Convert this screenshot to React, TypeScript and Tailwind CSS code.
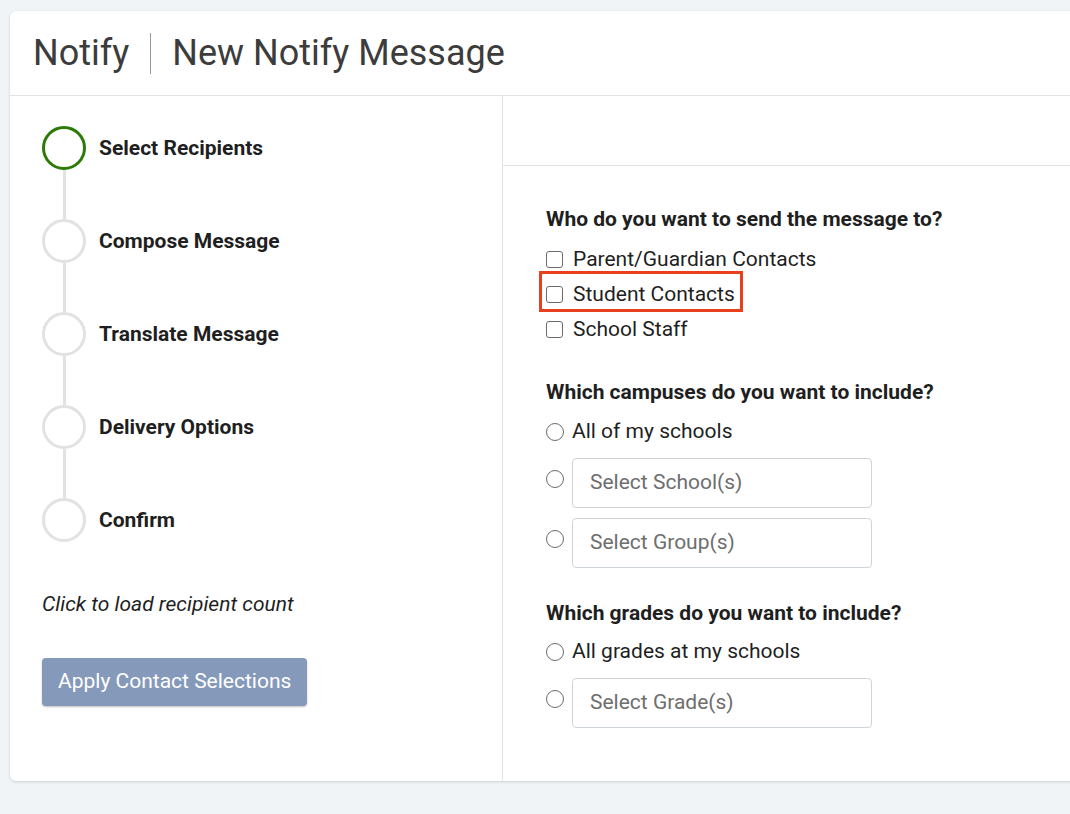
import { useState } from "react";

const steps = [
  "Select Recipients",
  "Compose Message",
  "Translate Message",
  "Delivery Options",
  "Confirm",
];

function Checkbox({ label }: { label: string }) {
  return (
    <label className="flex items-center gap-[10px] h-[35px]">
      <span className="w-[17px] h-[17px] border border-[#6b6b6b] rounded-[3px] bg-white shrink-0" />
      <span>{label}</span>
    </label>
  );
}

function Radio({ label }: { label: string }) {
  return (
    <label className="flex items-center gap-[8px] h-[38px]">
      <span className="w-[18px] h-[18px] border border-[#6b6b6b] rounded-full bg-white shrink-0" />
      <span>{label}</span>
    </label>
  );
}

function RadioSelect({ placeholder }: { placeholder: string }) {
  return (
    <div className="flex items-start gap-[8px]">
      <span className="w-[18px] h-[18px] border border-[#6b6b6b] rounded-full bg-white shrink-0 mt-[12px]" />
      <div className="w-[300px] h-[50px] border border-[#cfd4da] rounded-[4px] px-[17px] flex items-center text-[#6e6e6e]">
        {placeholder}
      </div>
    </div>
  );
}

export default function App() {
  const [active] = useState(0);

  return (
    <div
      className="min-h-[814px] bg-[#f1f4f7] pt-[11px] pl-[10px] overflow-hidden"
      style={{ fontFamily: "Roboto, 'Liberation Sans', sans-serif" }}
    >
      <div className="bg-white w-[1080px] h-[770px] rounded-tl-[6px] rounded-bl-[6px] shadow-[0_1px_3px_rgba(0,0,0,0.15)] flex flex-col">
        {/* Header */}
        <div className="h-[85px] border-b border-[#e3e3e3] flex items-center pl-[23px] text-[36px] text-[#3c3c3c]">
          <span>Notify</span>
          <span className="w-px h-[41px] bg-[#9a9a9a] mx-[21px]" />
          <span>New Notify Message</span>
        </div>

        <div className="flex flex-1">
          {/* Stepper */}
          <div className="w-[493px] border-r border-[#e3e3e3] pl-[32px] pt-[30px]">
            <div className="flex flex-col">
              {steps.map((s, i) => (
                <div key={s} className="flex">
                  <div className="flex flex-col items-center w-[44px]">
                    <span
                      className={`w-[44px] h-[44px] rounded-full border-[3px] ${
                        i === active ? "border-[#2e7a08]" : "border-[#e2e2e2]"
                      }`}
                    />
                    {i < steps.length - 1 && (
                      <span className="w-[3px] h-[49px] bg-[#e2e2e2]" />
                    )}
                  </div>
                  <div className="ml-[13px] h-[44px] pt-[2px] flex items-center text-[21px] font-bold text-[#1f1f1f]">
                    {s}
                  </div>
                </div>
              ))}
            </div>
            <p className="italic text-[21px] leading-[28px] text-[#1f1f1f] mt-[48px]">
              Click to load recipient count
            </p>
            <button className="mt-[40px] h-[48px] px-[16px] bg-[#8599bb] text-white text-[21px] rounded-[4px] shadow-[0_1px_2px_rgba(0,0,0,0.25)]">
              Apply Contact Selections
            </button>
          </div>

          {/* Form */}
          <div className="flex-1 flex flex-col">
            <div className="h-[70px] border-b border-[#e3e3e3]" />
            <div className="pl-[43px] pt-[40px] text-[21px] text-[#1f1f1f]">
              <h3 className="text-[21px] leading-[27px] font-bold mb-[9px]">
                Who do you want to send the message to?
              </h3>
              <Checkbox label="Parent/Guardian Contacts" />
              <div className="relative">
                <Checkbox label="Student Contacts" />
                <span className="absolute left-[-7px] top-[-6px] w-[204px] h-[41px] border-[3px] border-[#e8401c] pointer-events-none" />
              </div>
              <Checkbox label="School Staff" />

              <h3 className="text-[21px] leading-[27px] font-bold mt-[32px] mb-[7px]">
                Which campuses do you want to include?
              </h3>
              <Radio label="All of my schools" />
              <div className="mt-[7px] flex flex-col gap-[10px]">
                <RadioSelect placeholder="Select School(s)" />
                <RadioSelect placeholder="Select Group(s)" />
              </div>

              <h3 className="text-[21px] leading-[27px] font-bold mt-[32px] mb-[6px]">
                Which grades do you want to include?
              </h3>
              <Radio label="All grades at my schools" />
              <div className="mt-[7px]">
                <RadioSelect placeholder="Select Grade(s)" />
              </div>
            </div>
          </div>
        </div>
      </div>
    </div>
  );
}
